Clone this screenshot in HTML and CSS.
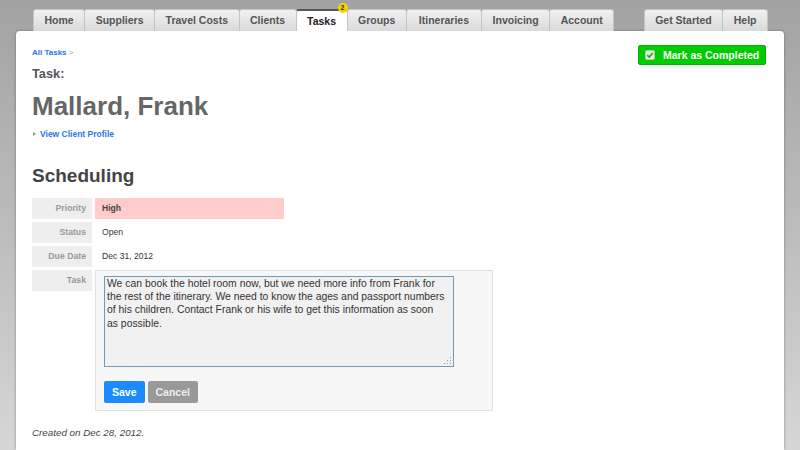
FILE: index.html
```html
<!DOCTYPE html>
<html lang="en">
<head>
<meta charset="utf-8">
<title>Task: Mallard, Frank</title>
<link rel="stylesheet" href="styles.css">
</head>
<body>
<nav class="tabs">
  <ul class="tab-group">
    <li class="tab">Home</li>
    <li class="tab">Suppliers</li>
    <li class="tab">Travel Costs</li>
    <li class="tab">Clients</li>
    <li class="tab tab-active">Tasks<span class="badge">2</span></li>
    <li class="tab">Groups</li>
    <li class="tab tab-wide">Itineraries</li>
    <li class="tab">Invoicing</li>
    <li class="tab">Account</li>
  </ul>
  <ul class="tab-group">
    <li class="tab">Get Started</li>
    <li class="tab">Help</li>
  </ul>
</nav>
<main class="panel">
  <div class="topbar">
    <div class="crumbs"><a class="crumb-link">All Tasks</a> <span class="crumb-sep">&gt;</span></div>
    <button class="complete-btn">
      <svg class="check-icon" width="10" height="10" viewBox="0 0 10 10">
        <rect x="0.5" y="0.5" width="9" height="9" rx="1.5" fill="#e4efe4" stroke="#a9d3a9"/>
        <path d="M2.3 5.1 L4.2 7 L7.8 3" fill="none" stroke="#22a322" stroke-width="1.6"/>
      </svg>
      Mark as Completed
    </button>
  </div>
  <h2 class="task-label">Task:</h2>
  <h1 class="client-name">Mallard, Frank</h1>
  <a class="profile-link">View Client Profile</a>
  <h2 class="section-title">Scheduling</h2>
  <div class="fields">
    <div class="field-label">Priority</div>
    <div class="field-value priority-high">High</div>
    <div class="field-label">Status</div>
    <div class="field-value">Open</div>
    <div class="field-label">Due Date</div>
    <div class="field-value">Dec 31, 2012</div>
    <div class="field-label">Task</div>
    <div class="task-box">
      <textarea class="task-text">We can book the hotel room now, but we need more info from Frank for the rest of the itinerary. We need to know the ages and passport numbers of his children. Contact Frank or his wife to get this information as soon
as possible.</textarea>
      <div class="actions">
        <button class="btn btn-save">Save</button>
        <button class="btn btn-cancel">Cancel</button>
      </div>
    </div>
  </div>
  <p class="created">Created on Dec 28, 2012.</p>
</main>
</body>
</html>
```
FILE: styles.css
```css
* { box-sizing: border-box; }
html, body { height: 100%; }
body {
  margin: 0;
  padding: 0 16px;
  overflow: hidden;
  display: flex;
  flex-direction: column;
  background: linear-gradient(#a2a2a2, #d6d6d6);
  font-family: "Liberation Sans", Arial, sans-serif;
  color: #333;
}
.tabs {
  position: relative;
  z-index: 2;
  display: flex;
  justify-content: space-between;
  padding: 9px 17px 0;
}
.tab-group {
  display: flex;
  list-style: none;
  margin: 0;
  padding: 0;
}
.tab {
  position: relative;
  height: 22px;
  padding: 0 10.5px;
  margin-right: -1px;
  border: 1px solid #c4c4c4;
  border-bottom: none;
  border-radius: 3px 3px 0 0;
  background: linear-gradient(#f1f1f1, #dadada);
  font-size: 10.5px;
  font-weight: bold;
  line-height: 21px;
  color: #555;
  white-space: nowrap;
}
.tab-wide { padding: 0 12px; }
.tab-active {
  z-index: 1;
  background: #fff;
  border-top: 2px solid #555;
  line-height: 20px;
  color: #222;
}
.badge {
  position: absolute;
  top: -8px;
  right: -1px;
  width: 10px;
  height: 10px;
  border-radius: 50%;
  background: #f3d400;
  color: #333;
  font-size: 7px;
  line-height: 10px;
  text-align: center;
}
.panel {
  flex: 1;
  background: #fff;
  border-radius: 4px 4px 0 0;
  box-shadow: 0 0 3px rgba(0, 0, 0, 0.35);
  padding: 14px 18px 0 16px;
}
.topbar {
  display: flex;
  justify-content: space-between;
  align-items: flex-start;
  height: 20px;
}
.crumbs {
  padding-top: 3px;
  font-size: 8px;
  line-height: 9px;
  font-weight: bold;
}
.crumb-link { color: #2b78e0; }
.crumb-sep { color: #999; font-weight: normal; }
.complete-btn {
  display: flex;
  align-items: center;
  gap: 8px;
  width: 128px;
  height: 20px;
  padding: 0 6px;
  border: 1px solid #00b800;
  border-radius: 2px;
  background: #00cc00;
  color: #fff;
  font-family: inherit;
  font-size: 10.5px;
  font-weight: bold;
  white-space: nowrap;
}
.check-icon { flex: none; }
.task-label {
  margin: 1px 0 0;
  font-size: 12.8px;
  line-height: 16px;
  color: #555;
}
.client-name {
  margin: 9px 0 0;
  font-size: 26px;
  line-height: 30px;
  color: #666;
}
.profile-link {
  display: block;
  position: relative;
  margin-top: 7px;
  padding-left: 8px;
  font-size: 8.5px;
  line-height: 12px;
  font-weight: bold;
  color: #2b78e0;
}
.profile-link::before {
  content: "";
  position: absolute;
  left: 1px;
  top: 4px;
  border-left: 3px solid #999;
  border-top: 2.5px solid transparent;
  border-bottom: 2.5px solid transparent;
}
.section-title {
  margin: 25px 0 0;
  font-size: 19px;
  line-height: 22px;
  color: #444;
}
.fields {
  display: grid;
  grid-template-columns: 60px auto;
  column-gap: 3px;
  row-gap: 3px;
  justify-items: start;
  margin-top: 11px;
}
.field-label {
  justify-self: stretch;
  height: 21px;
  padding-right: 6px;
  background: #eee;
  color: #999;
  font-size: 8.7px;
  font-weight: bold;
  line-height: 21px;
  text-align: right;
}
.field-value {
  width: 189px;
  height: 21px;
  padding-left: 7px;
  font-size: 8.6px;
  line-height: 21px;
  color: #333;
}
.priority-high {
  background: #ffcccc;
  font-weight: bold;
  color: #444;
}
.task-box {
  width: 398px;
  padding: 5px 8px 7px;
  border: 1px solid #e2e2e2;
  background: #f7f7f7;
}
.task-text {
  display: block;
  width: 350px;
  height: 91px;
  margin: 0;
  padding: 0 2px;
  border: 1px solid #6d9bbb;
  background: #f1f1f1 url("data:image/svg+xml,%3Csvg xmlns='http://www.w3.org/2000/svg' width='8' height='8'%3E%3Cg fill='%23999'%3E%3Crect x='6' y='0' width='1' height='1'/%3E%3Crect x='3' y='3' width='1' height='1'/%3E%3Crect x='6' y='3' width='1' height='1'/%3E%3Crect x='0' y='6' width='1' height='1'/%3E%3Crect x='3' y='6' width='1' height='1'/%3E%3Crect x='6' y='6' width='1' height='1'/%3E%3C/g%3E%3C/svg%3E") no-repeat right 1px bottom 1px;
  color: #333;
  font-family: "Liberation Sans", Arial, sans-serif;
  font-size: 10.4px;
  line-height: 13.2px;
  overflow: hidden;
  resize: none;
}
.actions {
  display: flex;
  gap: 3px;
  margin-top: 14px;
}
.btn {
  height: 22px;
  padding: 0 8px;
  border: none;
  border-radius: 2px;
  font-family: inherit;
  font-size: 10.5px;
  font-weight: bold;
}
.btn-save { background: #1a8cff; color: #fff; }
.btn-cancel { background: #999; color: #eee; }
.created {
  margin: 16px 0 0;
  font-size: 9.8px;
  line-height: 12px;
  font-style: italic;
  color: #444;
}
```
